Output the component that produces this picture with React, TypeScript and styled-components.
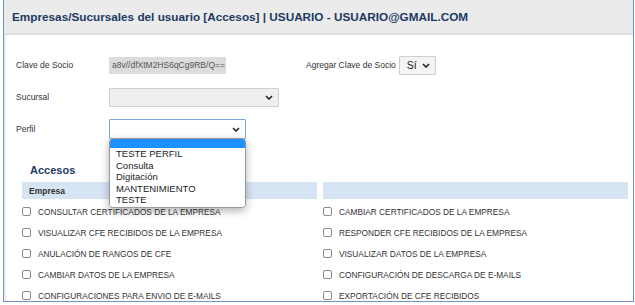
import React from "react";
import styled, { createGlobalStyle } from "styled-components";

const Global = createGlobalStyle`
  html, body { margin: 0; padding: 0; background: #fff; }
  body { font-family: "Liberation Sans", Arial, sans-serif; color: #333; }
`;

const Panel = styled.div`
  box-sizing: border-box;
  margin-left: 3px;
  width: 631px;
  height: 302px;
  border: 1px solid #6f93c4;
  border-top: none;
  overflow: hidden;
  display: flex;
  flex-direction: column;
`;

const Header = styled.div`
  height: 33px;
  background: #ebebeb;
  border-bottom: 2px solid #dedede;
  display: flex;
  align-items: center;
  padding-left: 8px;
  flex-shrink: 0;
`;

const Title = styled.h1`
  margin: 0;
  font-size: 11.75px;
  font-weight: bold;
  color: #1d3a63;
`;

const Body = styled.div`
  flex: 1;
  border-left: 2px solid #ebebeb;
  padding: 0 0 0 10px;
  position: relative;
`;

const Form = styled.div`
  display: grid;
  grid-template-columns: 93px auto;
  grid-auto-rows: 32px;
  padding-top: 14px;
  align-items: center;
`;

const Label = styled.span`
  font-size: 8.5px;
  color: #333;
`;

const FieldRow = styled.div`
  display: flex;
  align-items: center;
`;

const ReadValue = styled.div`
  width: 117px;
  height: 17px;
  background: #dcdcdc;
  display: flex;
  align-items: center;
  padding-left: 3px;
  box-sizing: border-box;
  font-size: 8.5px;
  color: #555;
`;

const InlineLabel = styled(Label)`
  margin-left: 80px;
  margin-right: 3px;
`;

const SelectBox = styled.div<{ $w: number; $h: number; $bg: string; $border: string }>`
  position: relative;
  box-sizing: border-box;
  width: ${(p) => p.$w}px;
  height: ${(p) => p.$h}px;
  background: ${(p) => p.$bg};
  border: 1px solid ${(p) => p.$border};
  border-radius: 1px;
  display: flex;
  align-items: center;
  justify-content: space-between;
  padding: 0 5px 0 7px;
  font-size: 10.5px;
  color: #222;
`;

const Dropdown = styled.div`
  position: absolute;
  left: 103px;
  top: 103px;
  width: 137px;
  box-sizing: border-box;
  background: #fff;
  border: 1px solid #9a9a9a;
  border-radius: 4px;
  box-shadow: 0 3px 8px rgba(0, 0, 0, 0.3);
  overflow: hidden;
  z-index: 5;
  padding-bottom: 1px;
`;

const Option = styled.div<{ $active?: boolean }>`
  height: ${(p) => (p.$active ? 9 : 11.5)}px;
  line-height: 11.5px;
  background: ${(p) => (p.$active ? "#1e90ff" : "#fff")};
  padding-left: 6px;
  font-size: 9.5px;
  color: #222;
  white-space: nowrap;
`;

const SectionTitle = styled.h2`
  margin: 19px 0 0 14px;
  font-size: 11px;
  font-weight: bold;
  color: #1d3a63;
  height: 14px;
`;

const Columns = styled.div`
  display: grid;
  grid-template-columns: 295px 305px;
  column-gap: 6px;
  margin: 4px 0 0 6px;
`;

const Column = styled.div`
  display: flex;
  flex-direction: column;
`;

const ColHead = styled.div`
  height: 17px;
  background: #d7e4f4;
  display: flex;
  align-items: center;
  padding-left: 7px;
  font-size: 8.5px;
  font-weight: bold;
  color: #333;
`;

const Item = styled.label`
  height: 21px;
  display: flex;
  align-items: center;
  padding-left: 0;
  font-size: 8.3px;
  color: #333;
  white-space: nowrap;
  &:first-of-type { margin-top: 2px; }
`;

const Box = styled.span`
  width: 7px;
  height: 7px;
  border: 1px solid #8a8a8a;
  border-radius: 2px;
  background: #fff;
  margin-right: 7px;
  flex-shrink: 0;
`;

const Chevron = () => (
  <svg width="8" height="5" viewBox="0 0 8 5">
    <path d="M1 1 L4 4 L7 1" fill="none" stroke="#222" strokeWidth="1.6" />
  </svg>
);

const left = [
  "CONSULTAR CERTIFICADOS DE LA EMPRESA",
  "VISUALIZAR CFE RECIBIDOS DE LA EMPRESA",
  "ANULACIÓN DE RANGOS DE CFE",
  "CAMBIAR DATOS DE LA EMPRESA",
  "CONFIGURACIONES PARA ENVIO DE E-MAILS",
];
const right = [
  "CAMBIAR CERTIFICADOS DE LA EMPRESA",
  "RESPONDER CFE RECIBIDOS DE LA EMPRESA",
  "VISUALIZAR DATOS DE LA EMPRESA",
  "CONFIGURACIÓN DE DESCARGA DE E-MAILS",
  "EXPORTACIÓN DE CFE RECIBIDOS",
];

export default function App() {
  return (
    <>
      <Global />
      <Panel>
        <Header>
          <Title>Empresas/Sucursales del usuario [Accesos] | USUARIO - USUARIO@GMAIL.COM</Title>
        </Header>
        <Body>
          <Form>
            <Label>Clave de Socio</Label>
            <FieldRow>
              <ReadValue>a8v//dfXtM2HS6qCg9RB/Q==</ReadValue>
              <InlineLabel>Agregar Clave de Socio</InlineLabel>
              <SelectBox $w={37} $h={19} $bg="#f4f4f4" $border="#cfcfcf">
                Sí <Chevron />
              </SelectBox>
            </FieldRow>
            <Label>Sucursal</Label>
            <FieldRow>
              <SelectBox $w={170} $h={19} $bg="#efefef" $border="#d0d0d0">
                <span />
                <Chevron />
              </SelectBox>
            </FieldRow>
            <Label>Perfil</Label>
            <FieldRow>
              <SelectBox $w={137} $h={20} $bg="#fff" $border="#7ba7dd">
                <span />
                <Chevron />
              </SelectBox>
            </FieldRow>
          </Form>
          <Dropdown>
            <Option $active />
            <Option>TESTE PERFIL</Option>
            <Option>Consulta</Option>
            <Option>Digitación</Option>
            <Option>MANTENIMIENTO</Option>
            <Option>TESTE</Option>
          </Dropdown>
          <SectionTitle>Accesos</SectionTitle>
          <Columns>
            <Column>
              <ColHead>Empresa</ColHead>
              {left.map((t) => (
                <Item key={t}>
                  <Box />
                  {t}
                </Item>
              ))}
            </Column>
            <Column>
              <ColHead />
              {right.map((t) => (
                <Item key={t}>
                  <Box />
                  {t}
                </Item>
              ))}
            </Column>
          </Columns>
        </Body>
      </Panel>
    </>
  );
}
